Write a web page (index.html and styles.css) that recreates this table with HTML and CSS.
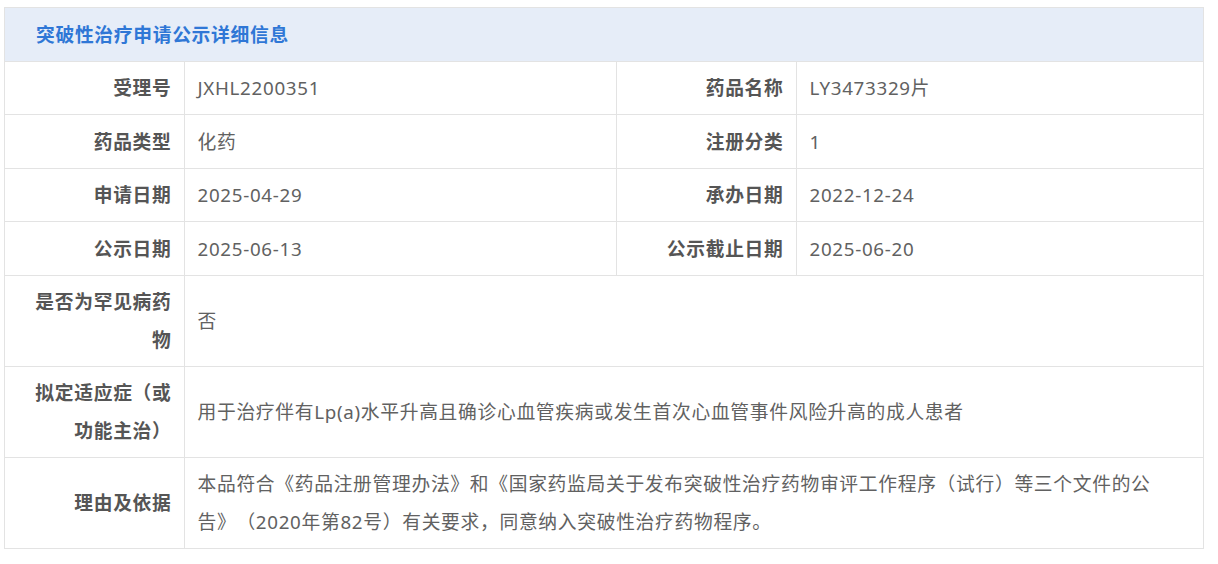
FILE: index.html
```html
<!DOCTYPE html>
<html lang="zh-CN">
<head>
<meta charset="utf-8">
<title>突破性治疗申请公示详细信息</title>
<link rel="stylesheet" href="styles.css">
</head>
<body>
<div class="page">
  <table class="detail">
    <colgroup>
      <col class="c-label">
      <col class="c-value">
      <col class="c-label">
      <col class="c-value2">
    </colgroup>
    <thead>
      <tr><th colspan="4" class="title">突破性治疗申请公示详细信息</th></tr>
    </thead>
    <tbody>
      <tr>
        <th class="label">受理号</th><td class="value">JXHL2200351</td>
        <th class="label">药品名称</th><td class="value">LY3473329片</td>
      </tr>
      <tr>
        <th class="label">药品类型</th><td class="value">化药</td>
        <th class="label">注册分类</th><td class="value">1</td>
      </tr>
      <tr>
        <th class="label">申请日期</th><td class="value">2025-04-29</td>
        <th class="label">承办日期</th><td class="value">2022-12-24</td>
      </tr>
      <tr>
        <th class="label">公示日期</th><td class="value">2025-06-13</td>
        <th class="label">公示截止日期</th><td class="value">2025-06-20</td>
      </tr>
      <tr>
        <th class="label">是否为罕见病药物</th><td class="value" colspan="3">否</td>
      </tr>
      <tr>
        <th class="label">拟定适应症（或功能主治）</th><td class="value" colspan="3">用于治疗伴有Lp(a)水平升高且确诊心血管疾病或发生首次心血管事件风险升高的成人患者</td>
      </tr>
      <tr>
        <th class="label">理由及依据</th><td class="value" colspan="3">本品符合《药品注册管理办法》和《国家药监局关于发布突破性治疗药物审评工作程序（试行）等三个文件的公告》（2020年第82号）有关要求，同意纳入突破性治疗药物程序。</td>
      </tr>
    </tbody>
  </table>
</div>
</body>
</html>
```

FILE: styles.css
```css
html, body {
  margin: 0;
  padding: 0;
  background: #ffffff;
}

.page {
  padding: 7px 14px 0 4px;
  font-family: "Noto Sans", "Noto Sans CJK SC", sans-serif;
  text-spacing-trim: space-all;
}

.detail {
  width: 1200px;
  border-collapse: collapse;
  table-layout: fixed;
  border: 1px solid #e3e3e3;
}

.c-label { width: 180px; }
.c-value { width: 432px; }
.c-value2 { width: auto; }

.detail th,
.detail td {
  border: 1px solid #e3e3e3;
  font-size: 18.75px;
  line-height: 37.5px;
  padding: 7.5px 12.5px;
  letter-spacing: 0.7px;
  vertical-align: middle;
}

.title {
  background: #e6edf8;
  color: #2f77d6;
  font-weight: 700;
  text-align: left;
  padding: 7.5px 31px !important;
  letter-spacing: 0.7px;
}

.label {
  color: #555555;
  font-weight: 700;
  text-align: right;
}

.value {
  color: #616161;
  font-weight: 400;
  text-align: left;
  padding-right: 30px !important;
}
```
